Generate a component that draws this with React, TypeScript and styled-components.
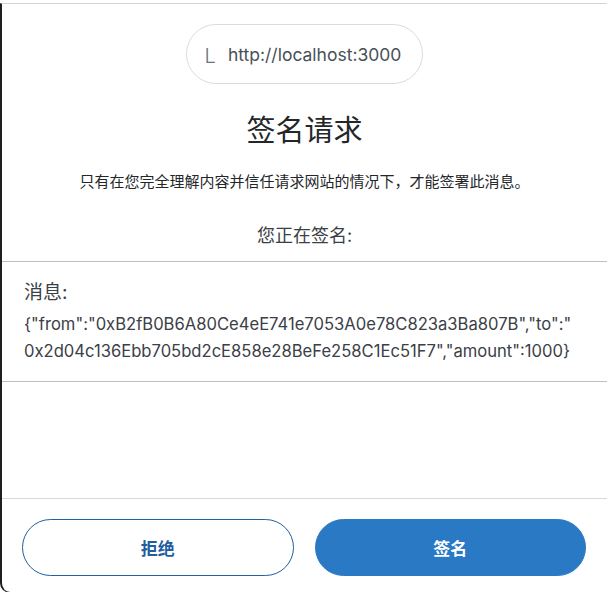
import React from "react";
import styled, { createGlobalStyle } from "styled-components";

const Global = createGlobalStyle`
  html, body { margin: 0; padding: 0; background: #ffffff; }
  body { font-family: Inter, "Noto Sans CJK SC", sans-serif; overflow: hidden; }
  * { box-sizing: border-box; }
`;

const Frame = styled.div`
  width: 620px;
  height: 590px;
  margin-top: 3px;
  border-top: 1px solid #d4d4d4;
  border-left: 2px solid #1e1e1e;
  border-bottom: 1px solid #333;
  border-bottom-left-radius: 10px;
  background: #fff;
  display: flex;
  flex-direction: column;
`;

const Inner = styled.div`
  width: 605px;
  height: 100%;
  display: flex;
  flex-direction: column;
`;

const Header = styled.div`
  display: flex;
  flex-direction: column;
  align-items: center;
  padding-top: 20px;
`;

const OriginPill = styled.div`
  display: flex;
  align-items: center;
  gap: 12px;
  height: 60px;
  padding: 0 21px 0 18px;
  border: 1px solid #dcdcdc;
  border-radius: 30px;
`;

const OriginInitial = styled.span`
  font-family: Inter, sans-serif;
  font-size: 20px;
  color: #6a737d;
  font-weight: 300;
  padding-top: 3px;
`;

const OriginUrl = styled.span`
  font-family: Inter, sans-serif;
  font-size: 17.5px;
  color: #4a5056;
`;

const Title = styled.h1`
  margin: 27px 0 0;
  font-size: 29px;
  font-weight: 400;
  color: #24272a;
  line-height: 40px;
`;

const Subtitle = styled.p`
  margin: 21px 0 0;
  font-size: 15px;
  color: #24272a;
  line-height: 20px;
`;

const Signing = styled.p`
  margin: 32px 0 0;
  font-size: 18px;
  color: #3b4046;
  line-height: 24px;
`;

const MessageBlock = styled.div`
  margin-top: 13px;
  border-top: 1px solid #bbc0c5;
  border-bottom: 1px solid #bbc0c5;
  padding: 19px 6px 16px 22px;
  color: #24272a;
`;

const MessageLabel = styled.div`
  font-size: 19px;
  line-height: 24px;
  color: #3b4046;
`;

const MessageBody = styled.div`
  margin-top: 6px;
  font-family: Inter, sans-serif;
  font-size: 16.6px;
  line-height: 27px;
  color: #3b4046;
  overflow-wrap: break-word;
`;

const Spacer = styled.div`
  flex: 1;
`;

const Footer = styled.div`
  border-top: 1px solid #d6d9dc;
  display: flex;
  gap: 21px;
  padding: 20px 21px 16px 20px;
`;

const Button = styled.button<{ $primary?: boolean }>`
  flex: 1;
  height: 57px;
  border-radius: 29px;
  font-family: Inter, "Noto Sans CJK SC", sans-serif;
  font-size: 17px;
  font-weight: 700;
  cursor: pointer;
  border: 1px solid ${(p) => (p.$primary ? "#2a79c5" : "#1f60a0")};
  background: ${(p) => (p.$primary ? "#2a79c5" : "#ffffff")};
  color: ${(p) => (p.$primary ? "#ffffff" : "#1f5d9e")};
`;

export default function App() {
  return (
    <>
      <Global />
      <Frame>
        <Inner>
          <Header>
            <OriginPill>
              <OriginInitial>L</OriginInitial>
              <OriginUrl>http://localhost:3000</OriginUrl>
            </OriginPill>
            <Title>签名请求</Title>
            <Subtitle>只有在您完全理解内容并信任请求网站的情况下，才能签署此消息。</Subtitle>
            <Signing>您正在签名:</Signing>
          </Header>
          <MessageBlock>
            <MessageLabel>消息:</MessageLabel>
            <MessageBody>
              {'{"from":"0xB2fB0B6A80Ce4eE741e7053A0e78C823a3Ba807B","to":"'}
              <wbr />
              {'0x2d04c136Ebb705bd2cE858e28BeFe258C1Ec51F7","amount":1000}'}
            </MessageBody>
          </MessageBlock>
          <Spacer />
          <Footer>
            <Button>拒绝</Button>
            <Button $primary>签名</Button>
          </Footer>
        </Inner>
      </Frame>
    </>
  );
}
